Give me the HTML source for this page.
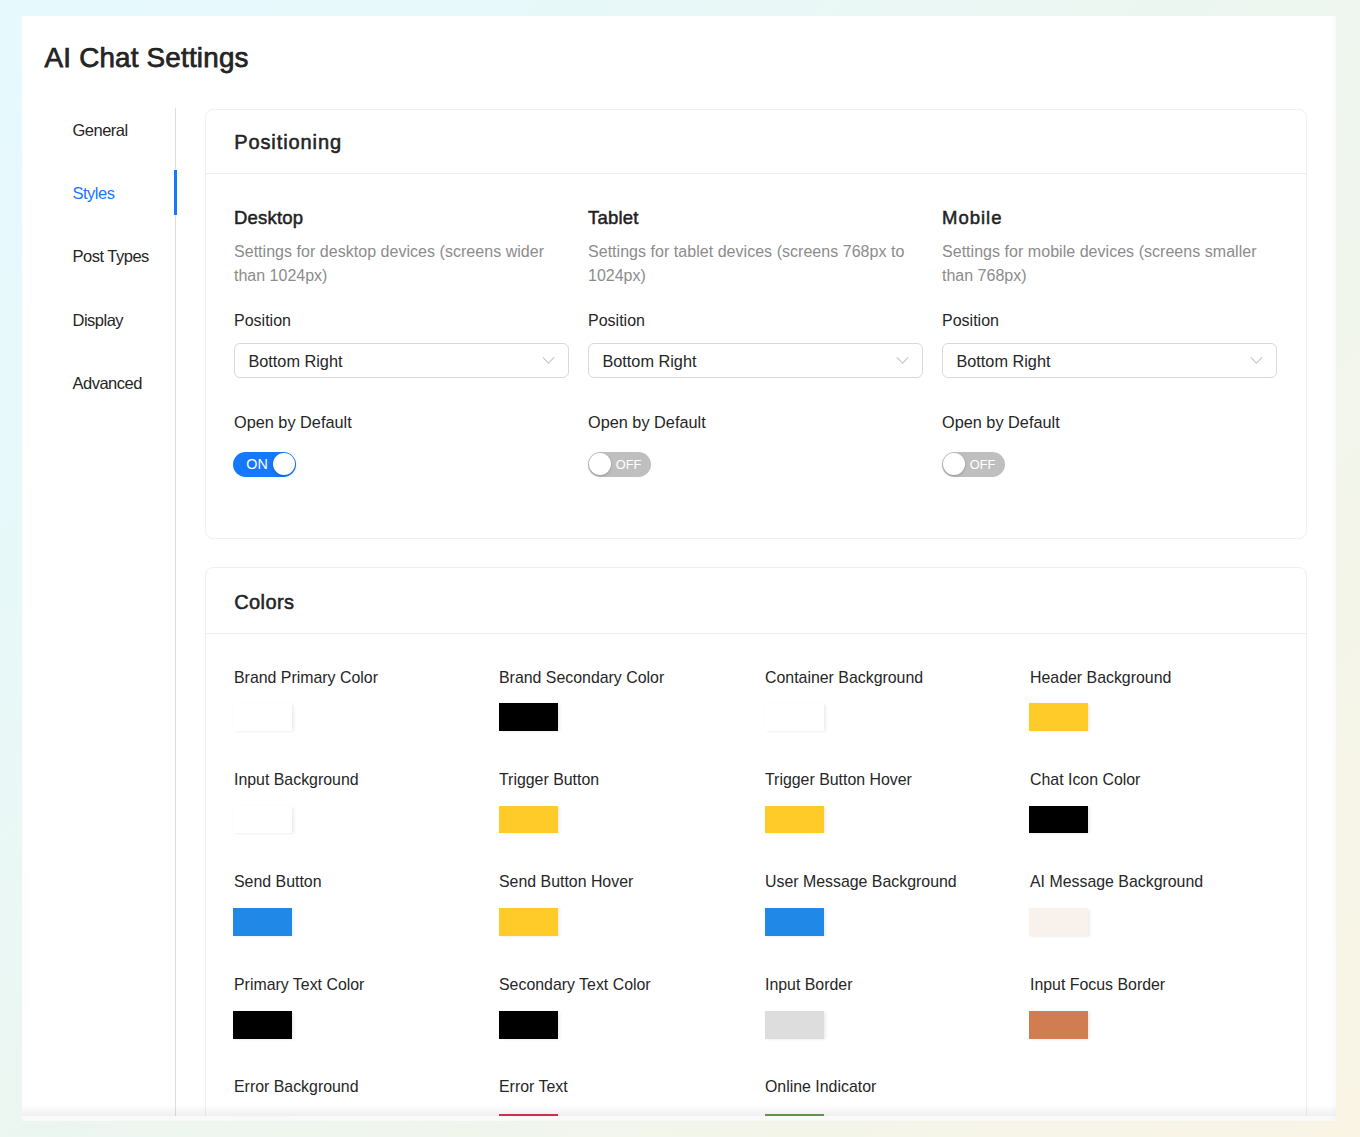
<!DOCTYPE html><html><head><meta charset="utf-8"><style>
*{box-sizing:border-box;margin:0;padding:0}
html,body{width:1360px;height:1137px;overflow:hidden}
body{font-family:"Liberation Sans",sans-serif;color:#262626;background:linear-gradient(135deg,#e6f9fd 0%,#e7f8f9 23%,#ecf6f0 48%,#f9f4e4 100%);position:relative}
.t{position:absolute;white-space:nowrap}
#card{position:absolute;left:22px;top:16px;width:1314px;height:1105px;background:#fff}
#clip{position:absolute;left:0;top:0;width:1360px;height:1116px;overflow:hidden}
.box{position:absolute}
.sec{position:absolute;border:1px solid #efefef;border-radius:8px;background:#fff}
.sel{position:absolute;border:1px solid #d9d9d9;border-radius:6px;background:#fff}
.tog{position:absolute;border-radius:13px}
.knob{position:absolute;border-radius:50%;background:#fff;box-shadow:0 1px 3px rgba(0,35,11,.25)}
.sw{position:absolute;border-radius:0;box-shadow:2px 0.5px 3px rgba(0,0,0,.07),0 0 1.5px rgba(0,0,0,.04)}
</style></head><body>
<div id="card"></div>
<div id="clip">
<div class="box" style="left:175px;top:108px;width:1px;height:1100px;background:#dedede"></div>
<div class="box" style="left:173.5px;top:170px;width:3px;height:45px;background:#1677ff"></div>
<div class="sec" style="left:204.5px;top:108.5px;width:1102px;height:430px"></div>
<div class="box" style="left:205px;top:172.5px;width:1101px;height:1px;background:#efefef"></div>
<div class="sel" style="left:234px;top:342.7px;width:335.4px;height:35.5px"></div>
<svg class="box" style="left:542.3px;top:356px" width="13" height="9" viewBox="0 0 13 9"><path d="M1 1.3 L6.5 7.3 L12 1.3" fill="none" stroke="#c4c4c4" stroke-width="1.1"/></svg>
<div class="tog" style="left:233.2px;top:451.5px;width:63.3px;height:25px;background:#1677ff"></div>
<div class="knob" style="left:273.1px;top:452.9px;width:22.2px;height:22.2px"></div>
<div class="sel" style="left:588px;top:342.7px;width:335.4px;height:35.5px"></div>
<svg class="box" style="left:896.3px;top:356px" width="13" height="9" viewBox="0 0 13 9"><path d="M1 1.3 L6.5 7.3 L12 1.3" fill="none" stroke="#c4c4c4" stroke-width="1.1"/></svg>
<div class="tog" style="left:588.3px;top:451.5px;width:62.5px;height:25px;background:#bfbfbf"></div>
<div class="knob" style="left:589.3px;top:452.9px;width:22.2px;height:22.2px"></div>
<div class="sel" style="left:942px;top:342.7px;width:335.4px;height:35.5px"></div>
<svg class="box" style="left:1250.3px;top:356px" width="13" height="9" viewBox="0 0 13 9"><path d="M1 1.3 L6.5 7.3 L12 1.3" fill="none" stroke="#c4c4c4" stroke-width="1.1"/></svg>
<div class="tog" style="left:942.3px;top:451.5px;width:62.5px;height:25px;background:#bfbfbf"></div>
<div class="knob" style="left:943.3px;top:452.9px;width:22.2px;height:22.2px"></div>
<div class="sec" style="left:204.5px;top:567px;width:1102px;height:700px"></div>
<div class="box" style="left:205px;top:632.5px;width:1101px;height:1px;background:#efefef"></div>
<div class="sw" style="left:233.3px;top:702.90px;width:58.6px;height:27.7px;background:#ffffff"></div>
<div class="sw" style="left:499.1px;top:702.90px;width:58.6px;height:27.7px;background:#000000"></div>
<div class="sw" style="left:765.1px;top:702.90px;width:58.6px;height:27.7px;background:#ffffff"></div>
<div class="sw" style="left:1029.1px;top:702.90px;width:58.6px;height:27.7px;background:#ffcb29"></div>
<div class="sw" style="left:233.3px;top:805.55px;width:58.6px;height:27.7px;background:#ffffff"></div>
<div class="sw" style="left:499.1px;top:805.55px;width:58.6px;height:27.7px;background:#ffcb29"></div>
<div class="sw" style="left:765.1px;top:805.55px;width:58.6px;height:27.7px;background:#ffcb29"></div>
<div class="sw" style="left:1029.1px;top:805.55px;width:58.6px;height:27.7px;background:#000000"></div>
<div class="sw" style="left:233.3px;top:908.20px;width:58.6px;height:27.7px;background:#2088e6"></div>
<div class="sw" style="left:499.1px;top:908.20px;width:58.6px;height:27.7px;background:#ffcb29"></div>
<div class="sw" style="left:765.1px;top:908.20px;width:58.6px;height:27.7px;background:#2088e6"></div>
<div class="sw" style="left:1029.1px;top:908.20px;width:58.6px;height:27.7px;background:#f9f1eb"></div>
<div class="sw" style="left:233.3px;top:1010.85px;width:58.6px;height:27.7px;background:#000000"></div>
<div class="sw" style="left:499.1px;top:1010.85px;width:58.6px;height:27.7px;background:#000000"></div>
<div class="sw" style="left:765.1px;top:1010.85px;width:58.6px;height:27.7px;background:#dddddd"></div>
<div class="sw" style="left:1029.1px;top:1010.85px;width:58.6px;height:27.7px;background:#d07e51"></div>
<div class="sw" style="left:233.3px;top:1113.50px;width:58.6px;height:27.7px;background:#ffffff"></div>
<div class="sw" style="left:499.1px;top:1113.50px;width:58.6px;height:27.7px;background:#d0354f"></div>
<div class="sw" style="left:765.1px;top:1113.50px;width:58.6px;height:27.7px;background:#6a9a50"></div>
<div class="t" style="left:44.6px;top:40px;font-size:27.8px;line-height:35px;letter-spacing:0.2px;-webkit-text-stroke:0.75px #1f1f1f;">AI Chat Settings</div>
<div class="t" style="left:72.5px;top:120px;font-size:16.5px;line-height:21px;letter-spacing:-0.5px;">General</div>
<div class="t" style="left:72.5px;top:183px;font-size:16.5px;line-height:21px;color:#1677ff;letter-spacing:-0.5px;">Styles</div>
<div class="t" style="left:72.5px;top:246px;font-size:16.5px;line-height:21px;letter-spacing:-0.5px;">Post Types</div>
<div class="t" style="left:72.5px;top:310px;font-size:16.5px;line-height:21px;letter-spacing:-0.5px;">Display</div>
<div class="t" style="left:72.5px;top:373px;font-size:16.5px;line-height:21px;letter-spacing:-0.5px;">Advanced</div>
<div class="t" style="left:234.2px;top:130px;font-size:20px;line-height:25px;letter-spacing:0.9px;-webkit-text-stroke:0.55px #1f1f1f;">Positioning</div>
<div class="t" style="left:234px;top:206px;font-size:18.5px;line-height:23px;color:#1f1f1f;letter-spacing:0.2px;-webkit-text-stroke:0.5px #1f1f1f;">Desktop</div>
<div class="t" style="left:234px;top:242px;font-size:16px;line-height:20px;color:#8c8c8c;letter-spacing:0.035px;">Settings for desktop devices (screens wider</div>
<div class="t" style="left:234px;top:266px;font-size:16px;line-height:20px;color:#8c8c8c;">than 1024px)</div>
<div class="t" style="left:234px;top:311px;font-size:16px;line-height:20px;">Position</div>
<div class="t" style="left:248.4px;top:351px;font-size:16.3px;line-height:20px;">Bottom Right</div>
<div class="t" style="left:234px;top:412px;font-size:16.3px;line-height:20px;">Open by Default</div>
<div class="t" style="left:246.3px;top:455px;font-size:14.3px;line-height:18px;color:#fff;">ON</div>
<div class="t" style="left:588px;top:206px;font-size:18.5px;line-height:23px;color:#1f1f1f;letter-spacing:0.2px;-webkit-text-stroke:0.5px #1f1f1f;">Tablet</div>
<div class="t" style="left:588px;top:242px;font-size:16px;line-height:20px;color:#8c8c8c;letter-spacing:0.035px;">Settings for tablet devices (screens 768px to</div>
<div class="t" style="left:588px;top:266px;font-size:16px;line-height:20px;color:#8c8c8c;">1024px)</div>
<div class="t" style="left:588px;top:311px;font-size:16px;line-height:20px;">Position</div>
<div class="t" style="left:602.4px;top:351px;font-size:16.3px;line-height:20px;">Bottom Right</div>
<div class="t" style="left:588px;top:412px;font-size:16.3px;line-height:20px;">Open by Default</div>
<div class="t" style="left:615.8px;top:457px;font-size:12.8px;line-height:16px;color:#fff;">OFF</div>
<div class="t" style="left:942px;top:206px;font-size:18.5px;line-height:23px;color:#1f1f1f;letter-spacing:1px;-webkit-text-stroke:0.5px #1f1f1f;">Mobile</div>
<div class="t" style="left:942px;top:242px;font-size:16px;line-height:20px;color:#8c8c8c;letter-spacing:0.035px;">Settings for mobile devices (screens smaller</div>
<div class="t" style="left:942px;top:266px;font-size:16px;line-height:20px;color:#8c8c8c;">than 768px)</div>
<div class="t" style="left:942px;top:311px;font-size:16px;line-height:20px;">Position</div>
<div class="t" style="left:956.4px;top:351px;font-size:16.3px;line-height:20px;">Bottom Right</div>
<div class="t" style="left:942px;top:412px;font-size:16.3px;line-height:20px;">Open by Default</div>
<div class="t" style="left:969.8px;top:457px;font-size:12.8px;line-height:16px;color:#fff;">OFF</div>
<div class="t" style="left:234.2px;top:590px;font-size:20px;line-height:25px;letter-spacing:0.4px;-webkit-text-stroke:0.55px #1f1f1f;">Colors</div>
<div class="t" style="left:234px;top:668px;font-size:15.9px;line-height:20px;">Brand Primary Color</div>
<div class="t" style="left:499px;top:668px;font-size:15.9px;line-height:20px;">Brand Secondary Color</div>
<div class="t" style="left:765px;top:668px;font-size:15.9px;line-height:20px;">Container Background</div>
<div class="t" style="left:1030px;top:668px;font-size:15.9px;line-height:20px;">Header Background</div>
<div class="t" style="left:234px;top:770px;font-size:15.9px;line-height:20px;">Input Background</div>
<div class="t" style="left:499px;top:770px;font-size:15.9px;line-height:20px;">Trigger Button</div>
<div class="t" style="left:765px;top:770px;font-size:15.9px;line-height:20px;">Trigger Button Hover</div>
<div class="t" style="left:1030px;top:770px;font-size:15.9px;line-height:20px;">Chat Icon Color</div>
<div class="t" style="left:234px;top:872px;font-size:15.9px;line-height:20px;">Send Button</div>
<div class="t" style="left:499px;top:872px;font-size:15.9px;line-height:20px;">Send Button Hover</div>
<div class="t" style="left:765px;top:872px;font-size:15.9px;line-height:20px;">User Message Background</div>
<div class="t" style="left:1030px;top:872px;font-size:15.9px;line-height:20px;">AI Message Background</div>
<div class="t" style="left:234px;top:975px;font-size:15.9px;line-height:20px;">Primary Text Color</div>
<div class="t" style="left:499px;top:975px;font-size:15.9px;line-height:20px;">Secondary Text Color</div>
<div class="t" style="left:765px;top:975px;font-size:15.9px;line-height:20px;">Input Border</div>
<div class="t" style="left:1030px;top:975px;font-size:15.9px;line-height:20px;">Input Focus Border</div>
<div class="t" style="left:234px;top:1077px;font-size:15.9px;line-height:20px;">Error Background</div>
<div class="t" style="left:499px;top:1077px;font-size:15.9px;line-height:20px;">Error Text</div>
<div class="t" style="left:765px;top:1077px;font-size:15.9px;line-height:20px;">Online Indicator</div>
</div>
<div class="box" style="left:22px;top:1104px;width:1314px;height:12px;background:linear-gradient(to bottom,rgba(0,0,0,0),rgba(0,0,0,.06))"></div>
<div class="box" style="left:22px;top:1116px;width:1314px;height:5px;background:#f9f9f9"></div>
<div class="box" style="left:1330px;top:16px;width:6px;height:1105px;background:linear-gradient(to right,rgba(0,0,0,0),rgba(0,0,0,.02))"></div>
</body></html>
